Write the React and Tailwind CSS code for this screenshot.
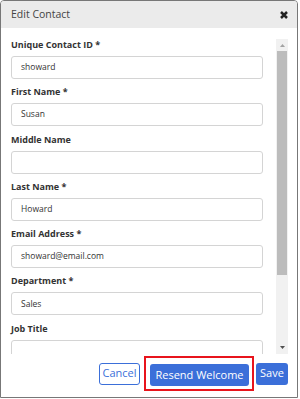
import React from "react";

const fields = [
  { label: "Unique Contact ID", required: true, value: "showard" },
  { label: "First Name", required: true, value: "Susan" },
  { label: "Middle Name", required: false, value: "" },
  { label: "Last Name", required: true, value: "Howard" },
  { label: "Email Address", required: true, value: "showard@email.com" },
  { label: "Department", required: true, value: "Sales" },
  { label: "Job Title", required: false, value: "" },
];

function Field({ label, required, value }) {
  return (
    <div className="mb-[6.3px]">
      <div className="text-[9px] leading-[14px] font-bold text-[#333] mb-[4px]">
        {label}
        {required ? " *" : ""}
      </div>
      <div className="h-[23px] w-[252px] border border-[#d4d4d4] rounded-[3px] flex items-center pl-[9px] text-[8.5px] text-[#333]">
        {value}
      </div>
    </div>
  );
}

export default function App() {
  return (
    <div className="w-[298px] h-[398px] border border-[#777] rounded-t-[4px] overflow-hidden bg-white flex flex-col font-['Open_Sans',sans-serif]">
      {/* Header */}
      <div className="h-[27px] shrink-0 bg-[#ebebeb] flex items-center justify-between pl-[10px] pr-[9px]">
        <span className="text-[10.5px] text-[#444]">Edit Contact</span>
        <svg width="8" height="8" viewBox="0 0 8 8">
          <path d="M1 1 L7 7 M7 1 L1 7" stroke="#222" strokeWidth="2.5" />
        </svg>
      </div>

      {/* Body */}
      <div className="h-[326px] shrink-0 overflow-hidden flex">
        <div className="w-[274px] pl-[10px] pt-[10px]">
          {fields.map((f) => (
            <Field key={f.label} {...f} />
          ))}
        </div>
        <div className="mt-[11px] ml-[1px] w-[12px] bg-[#f1f1f1] flex flex-col items-center">
          <div className="h-[12px] flex items-center justify-center">
            <svg width="5" height="3" viewBox="0 0 5 3">
              <path d="M0 3 L2.5 0 L5 3 Z" fill="#a3a3a3" />
            </svg>
          </div>
          <div className="w-[10px] h-[224px] bg-[#bcbcbc]" />
          <div className="flex-1" />
          <div className="h-[14px] flex items-center justify-center">
            <svg width="5" height="3" viewBox="0 0 5 3">
              <path d="M0 0 L5 0 L2.5 3 Z" fill="#505050" />
            </svg>
          </div>
        </div>
      </div>

      {/* Footer */}
      <div className="flex-1 flex items-center justify-end pr-[9px] pb-[4px]">
        <button className="h-[22px] w-[41px] border border-[#3b6fd9] rounded-[3px] text-[11px] text-[#3b6fd9] bg-white">
          Cancel
        </button>
        <div className="ml-[4px] border-2 border-[#e8141c] pl-[4px] pr-[3px] py-[3px]">
          <button className="h-[22px] w-[99px] rounded-[3px] bg-[#3b6fd9] text-white text-[11px]">
            Resend Welcome
          </button>
        </div>
        <button className="ml-[2px] h-[22px] w-[32px] rounded-[3px] bg-[#3b6fd9] text-white text-[11px]">
          Save
        </button>
      </div>
    </div>
  );
}
